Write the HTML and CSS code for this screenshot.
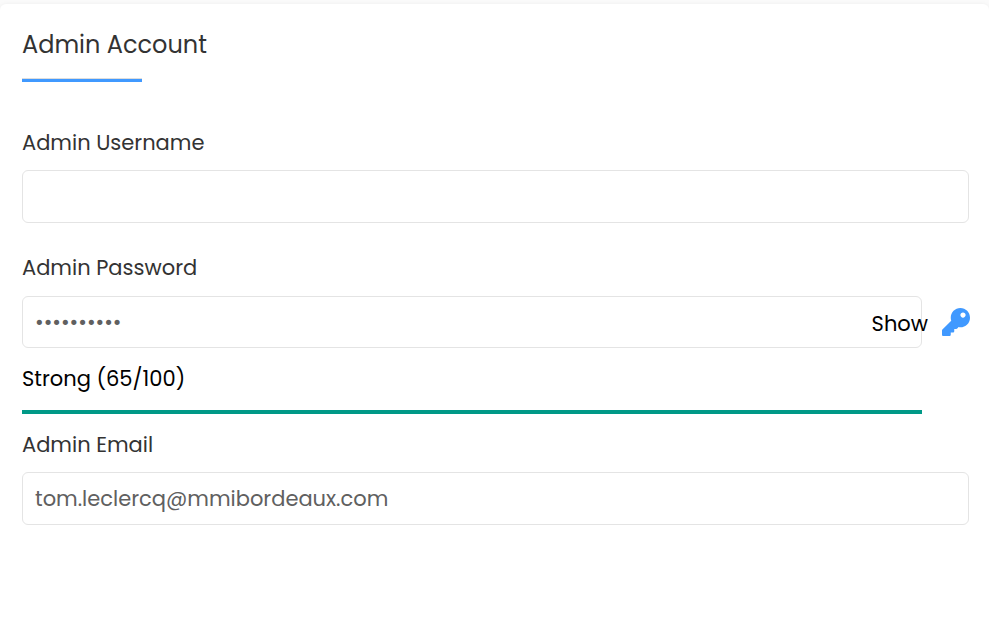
FILE: index.html
```html
<!DOCTYPE html>
<html lang="en">
<head>
<meta charset="utf-8">
<meta name="viewport" content="width=device-width, initial-scale=1">
<title>Admin Account</title>
<link rel="stylesheet" href="styles.css">
</head>
<body>
<form class="card">
  <h2 class="card-title">Admin Account</h2>
  <div class="field">
    <label class="label" for="username">Admin Username</label>
    <input class="input" id="username" type="text">
  </div>
  <div class="field">
    <label class="label" for="password">Admin Password</label>
    <div class="password-row">
      <div class="password-box">
        <input class="input input-password" id="password" type="password" value="abcdefghij">
        <button class="show" type="button">Show</button>
      </div>
      <button class="generate" type="button" aria-label="Generate password">
        <svg class="key" viewBox="0 0 512 512" aria-hidden="true"><path d="M512 176.001C512 273.203 433.202 352 336 352c-11.220 0-22.190-1.062-32.827-3.069l-24.012 27.014A23.999 23.999 0 0 1 261.223 384H224v40c0 13.255-10.745 24-24 24h-40v40c0 13.255-10.745 24-24 24H24c-13.255 0-24-10.745-24-24v-78.059c0-6.365 2.529-12.470 7.029-16.971l161.802-161.802C163.108 213.814 160 195.271 160 176 160 78.798 238.797.001 335.999 0 433.488-.001 512 78.511 512 176.001zM336 128c0 26.510 21.490 48 48 48s48-21.490 48-48-21.490-48-48-48-48 21.490-48 48z"/></svg>
      </button>
    </div>
    <div class="strength">
      <p class="strength-text">Strong (65/100)</p>
      <div class="strength-bar"></div>
    </div>
  </div>
  <div class="field">
    <label class="label" for="email">Admin Email</label>
    <input class="input" id="email" type="email" value="tom.leclercq@mmibordeaux.com">
  </div>
</form>
</body>
</html>
```
FILE: styles.css
```css
* {
  box-sizing: border-box;
}

body {
  margin: 0;
  padding-top: 4px;
  min-height: 100vh;
  display: flex;
  flex-direction: column;
  background: #fafafa;
  color: #000;
  font: 400 21px/32px Poppins, Inter, sans-serif;
}

.card {
  flex: 1;
  padding: 24px 20px 24px 22px;
  background: #fff;
  border-radius: 6px 6px 0 0;
  box-shadow: 0 0 4px rgba(0, 0, 0, 0.05);
}

.card-title {
  margin: 0 0 45px;
  color: #333;
  font-size: 24px;
  font-weight: 400;
  line-height: 34px;
}

.card-title::after {
  content: "";
  display: block;
  width: 120px;
  height: 3px;
  margin-top: 17px;
  background: #4099ff;
  box-shadow: 0 -1px #ddd;
}

.field {
  margin-bottom: 29px;
}

.field:has(.strength) {
  margin-bottom: 15px;
}

.label {
  display: block;
  margin-bottom: 11px;
  color: #333;
}

.input {
  display: block;
  width: 100%;
  height: 53px;
  padding: 0 12px;
  border: 1px solid #e4e4e4;
  border-radius: 6px;
  background: #fff;
  color: #606060;
  font: inherit;
  outline: none;
}

.password-row {
  display: flex;
  align-items: center;
  gap: 20px;
  margin-top: 12px;
}

.password-box {
  position: relative;
  flex: 1;
}

.input-password {
  height: 52px;
}

.show {
  position: absolute;
  top: 12px;
  right: -6px;
  padding: 0;
  border: 0;
  background: none;
  color: #000;
  font: inherit;
}

.generate {
  display: flex;
  width: 27px;
  padding: 0;
  border: 0;
  background: none;
}

.key {
  flex: none;
  width: 28px;
  height: 28px;
  fill: #4099ff;
}

.strength {
  margin-right: 47px;
}

.strength-text {
  margin: 15px 0;
}

.strength-bar {
  height: 4px;
  background: #009987;
}
```
